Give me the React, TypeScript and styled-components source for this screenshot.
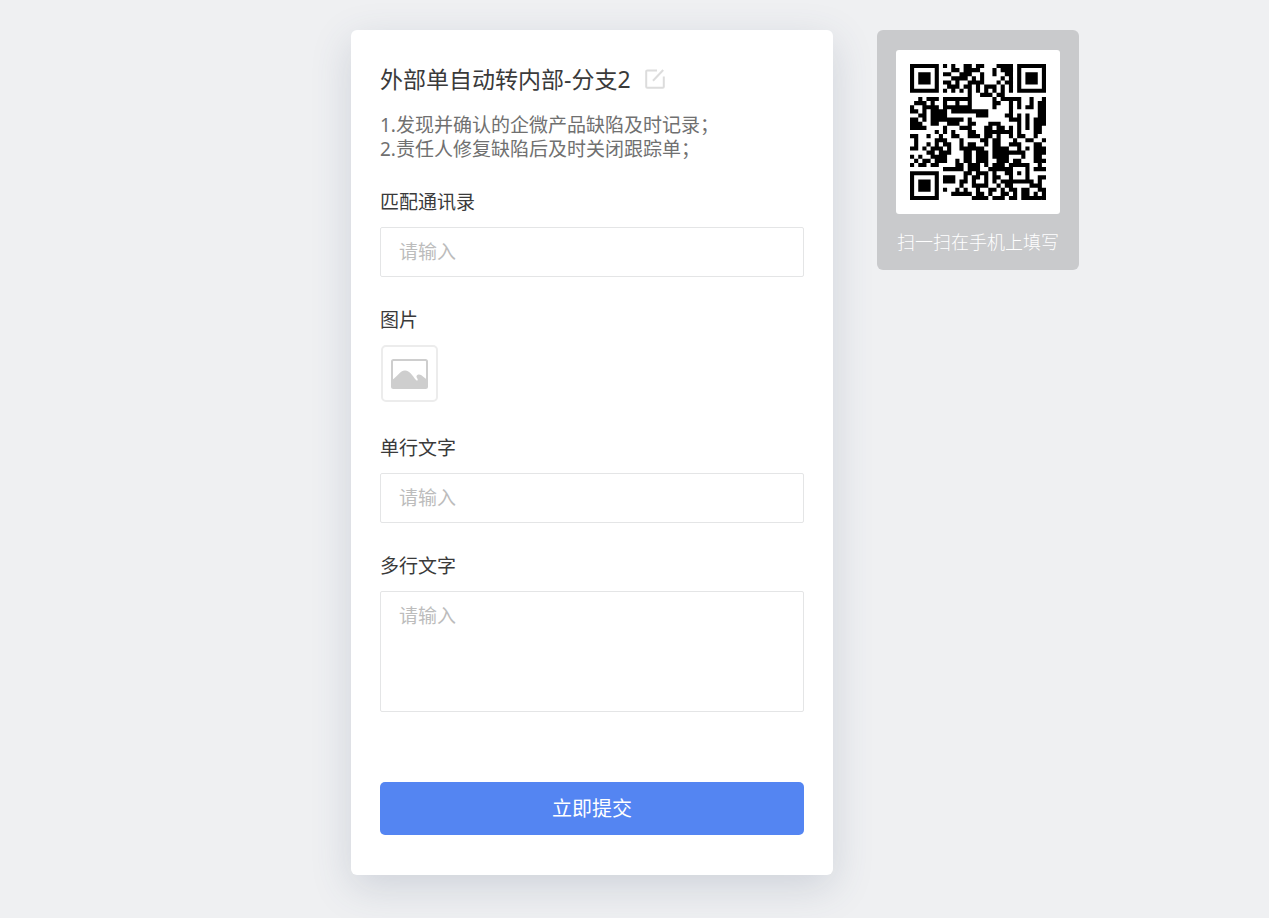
import React from 'react';
import styled, { createGlobalStyle } from 'styled-components';

const GlobalStyle = createGlobalStyle`
  * { box-sizing: border-box; }
  body {
    margin: 0;
    background: #eff0f2;
    color: #3a3a3a;
    font-family: "Noto Sans", "Noto Sans CJK SC", sans-serif;
    font-size: 19px;
    line-height: 24px;
  }
`;

const Page = styled.main`
  display: flex;
  justify-content: center;
  align-items: flex-start;
  gap: 44px;
  padding: 30px 0 43px 161px;
`;

const Card = styled.form`
  flex: 0 1 482px;
  padding: 33px 29px 40px;
  background: #fff;
  border-radius: 6px;
  box-shadow: 0 12px 40px rgba(60, 75, 110, 0.18);
`;

const TitleRow = styled.header`
  display: flex;
  align-items: center;
  gap: 14px;
`;

const Title = styled.h1`
  margin: 0;
  font-size: 23px;
  line-height: 32px;
  font-weight: 400;
`;

const EditButton = styled.button`
  display: flex;
  padding: 0;
  border: 0;
  background: none;
  color: #dcdcdc;
  cursor: pointer;
`;

const Description = styled.p`
  margin: 18px 0 29px;
  color: #707070;
`;

const Field = styled.div`
  display: flex;
  flex-direction: column;
  align-items: flex-start;
  gap: 13px;
  margin-bottom: 31px;
`;

const Label = styled.label`
  cursor: default;
`;

const TextInput = styled.input`
  width: 100%;
  height: 50px;
  padding: 0 18px;
  border: 1px solid #e4e5e6;
  border-radius: 2px;
  background: #fff;
  font: inherit;
  color: inherit;
  &::placeholder { color: #bcbcbc; opacity: 1; }
`;

const TextArea = styled.textarea`
  display: block;
  width: 100%;
  height: 121px;
  padding: 12px 18px;
  border: 1px solid #e4e5e6;
  border-radius: 2px;
  background: #fff;
  font: inherit;
  color: inherit;
  resize: none;
  &::placeholder { color: #bcbcbc; opacity: 1; }
`;

const ImagePicker = styled.button`
  display: flex;
  align-items: center;
  justify-content: center;
  width: 57px;
  height: 57px;
  margin: 0 0 3px 1px;
  padding: 0;
  border: 2px solid #ececec;
  border-radius: 5px;
  background: #fff;
  cursor: pointer;
`;

const SubmitButton = styled.button`
  display: block;
  width: 100%;
  height: 53px;
  margin-top: 70px;
  border: 0;
  border-radius: 5px;
  background: #5485f2;
  color: #fff;
  font: inherit;
  font-size: 20px;
  cursor: pointer;
`;

const ScanPanel = styled.aside`
  flex: 0 0 202px;
  display: flex;
  flex-direction: column;
  align-items: center;
  gap: 16px;
  padding: 20px 0 16px;
  border-radius: 6px;
  background: #c9cacc;
  color: #fff;
  font-size: 18px;
  font-weight: 300;
`;

const QrFrame = styled.div`
  display: flex;
  padding: 14px;
  border-radius: 3px;
  background: #fff;
`;

const ScanText = styled.span`
  white-space: nowrap;
`;

const QR_ROWS = [
  'XXXXXXX.X.X..XX.XX...XXXX.XXXXXXX',
  'X.....X...XX.XXXX...X.XXX.X.....X',
  'X.XXX.X.XX..XXX..X..X..XX.X.XXX.X',
  'X.XXX.X...XXXX.X.X....X.X.X.XXX.X',
  'X.XXX.X.XX.X..XXXX...X.XX.X.XXX.X',
  'X.....X..XXX.XX.X.XXX.X.X.X.....X',
  'XXXXXXX.X.X.X.X.X.X.X.X.X.XXXXXXX',
  '..............X..XXX.XX..........',
  '..X.XXX.XXXXXXX.....X.XXXXX..X..X',
  '.XXX.X..X..X..X.....XX..X.X..X.XX',
  'X..XXXX.XXXXXXX.....X...X.X.XX.XX',
  'XX.X.XXXX.XXXXXXXXX.....X......XX',
  '..XX.XXXX.......XXX....XX.X.X..XX',
  'XX.X.XXXXXXXX.X.........XXX.X.XXX',
  'XXX..XX..XXX..XX...XXX....X.X.XXX',
  'XXXX....X...XXX...XX.XX.X.X.X.XX.',
  '......X.X.X...XX..XXXXXXX.X...XX.',
  'XX..X..X..XX..XXX.XX.X..X.XX..X..',
  '.X....XXX...X....XX.XX...X..XX..X',
  '.X..X.X.XX..X.XX..X.XX..XXX...XX.',
  'XX.X.XXX.X..XXXXXX..XXXX..X.X.XXX',
  '....XX.XXX...XX.XXX.XXXXXXXX..XXX',
  'X.X..XXXX....XX.XXX.XXXX...X..XX.',
  '.X.XX.XXX..X.XX.XXX..XXX.XX...XXX',
  'X.XX.XX....XX.XXX.X.XXX.XXXXX..X.',
  '........XXXXX.XXX..XXXXXX...X.XXX',
  'XXXXXXX......XX.XXX.X..XX.X.X....',
  'X.....X.XXX..X.XX.X.XX..X...X..XX',
  'X.XXX.X.XXX.XX.X..X.X.XXXXXXXX.X.',
  'X.XXX.X.....X..XXXX..X.XX....XXX.',
  'X.XXX.X.X..X.X..X..XX.X.XX.XX..XX',
  'X.....X...XXXXX.XX.X..XX.X.XX.X.X',
  'XXXXXXX........XXXX.XXX.XX.XXXXXX',
];

const qrPath = QR_ROWS.map((row, y) =>
  [...row].map((cell, x) => (cell === 'X' ? `M${x} ${y}h1v1h-1z` : '')).join(''),
).join('');

const QrCode = () => (
  <svg width="136" height="136" viewBox="0 0 33 33" role="img" aria-label="二维码">
    <path d={qrPath} fill="#000" />
  </svg>
);

const EditIcon = () => (
  <svg width="20" height="20" viewBox="0 0 20 20" fill="none" stroke="currentColor" strokeWidth="2">
    <path d="M12 1.500H2.200a1 1 0 0 0-1 1v15.300a1 1 0 0 0 1 1h15.600a1 1 0 0 0 1-1V7.500" />
    <path d="M8 11.800L18.200 1" />
  </svg>
);

const ImageIcon = () => (
  <svg width="37" height="30" viewBox="0 0 37 30">
    <rect x="1" y="1" width="35" height="28" rx="1.500" fill="none" stroke="#cecece" strokeWidth="2" />
    <path
      d="M1 21C6 18 9 11.500 14 11.500C19 11.500 21.500 17 25 21C26.500 22.500 27.500 21 26 19C24.500 17 26.500 15.500 28 15.500C31 15.500 33 19 36 20.500V29H1Z"
      fill="#cecece"
    />
  </svg>
);

export default function App() {
  return (
    <>
      <GlobalStyle />
      <Page>
        <Card onSubmit={(e: React.FormEvent) => e.preventDefault()}>
          <TitleRow>
            <Title>外部单自动转内部-分支2</Title>
            <EditButton type="button" aria-label="编辑">
              <EditIcon />
            </EditButton>
          </TitleRow>
          <Description>
            1.发现并确认的企微产品缺陷及时记录；
            <br />
            2.责任人修复缺陷后及时关闭跟踪单；
          </Description>
          <Field>
            <Label htmlFor="contact">匹配通讯录</Label>
            <TextInput id="contact" placeholder="请输入" />
          </Field>
          <Field>
            <Label htmlFor="picture">图片</Label>
            <ImagePicker id="picture" type="button">
              <ImageIcon />
            </ImagePicker>
          </Field>
          <Field>
            <Label htmlFor="single">单行文字</Label>
            <TextInput id="single" placeholder="请输入" />
          </Field>
          <Field>
            <Label htmlFor="multi">多行文字</Label>
            <TextArea id="multi" placeholder="请输入" />
          </Field>
          <SubmitButton type="submit">立即提交</SubmitButton>
        </Card>
        <ScanPanel>
          <QrFrame>
            <QrCode />
          </QrFrame>
          <ScanText>扫一扫在手机上填写</ScanText>
        </ScanPanel>
      </Page>
    </>
  );
}
